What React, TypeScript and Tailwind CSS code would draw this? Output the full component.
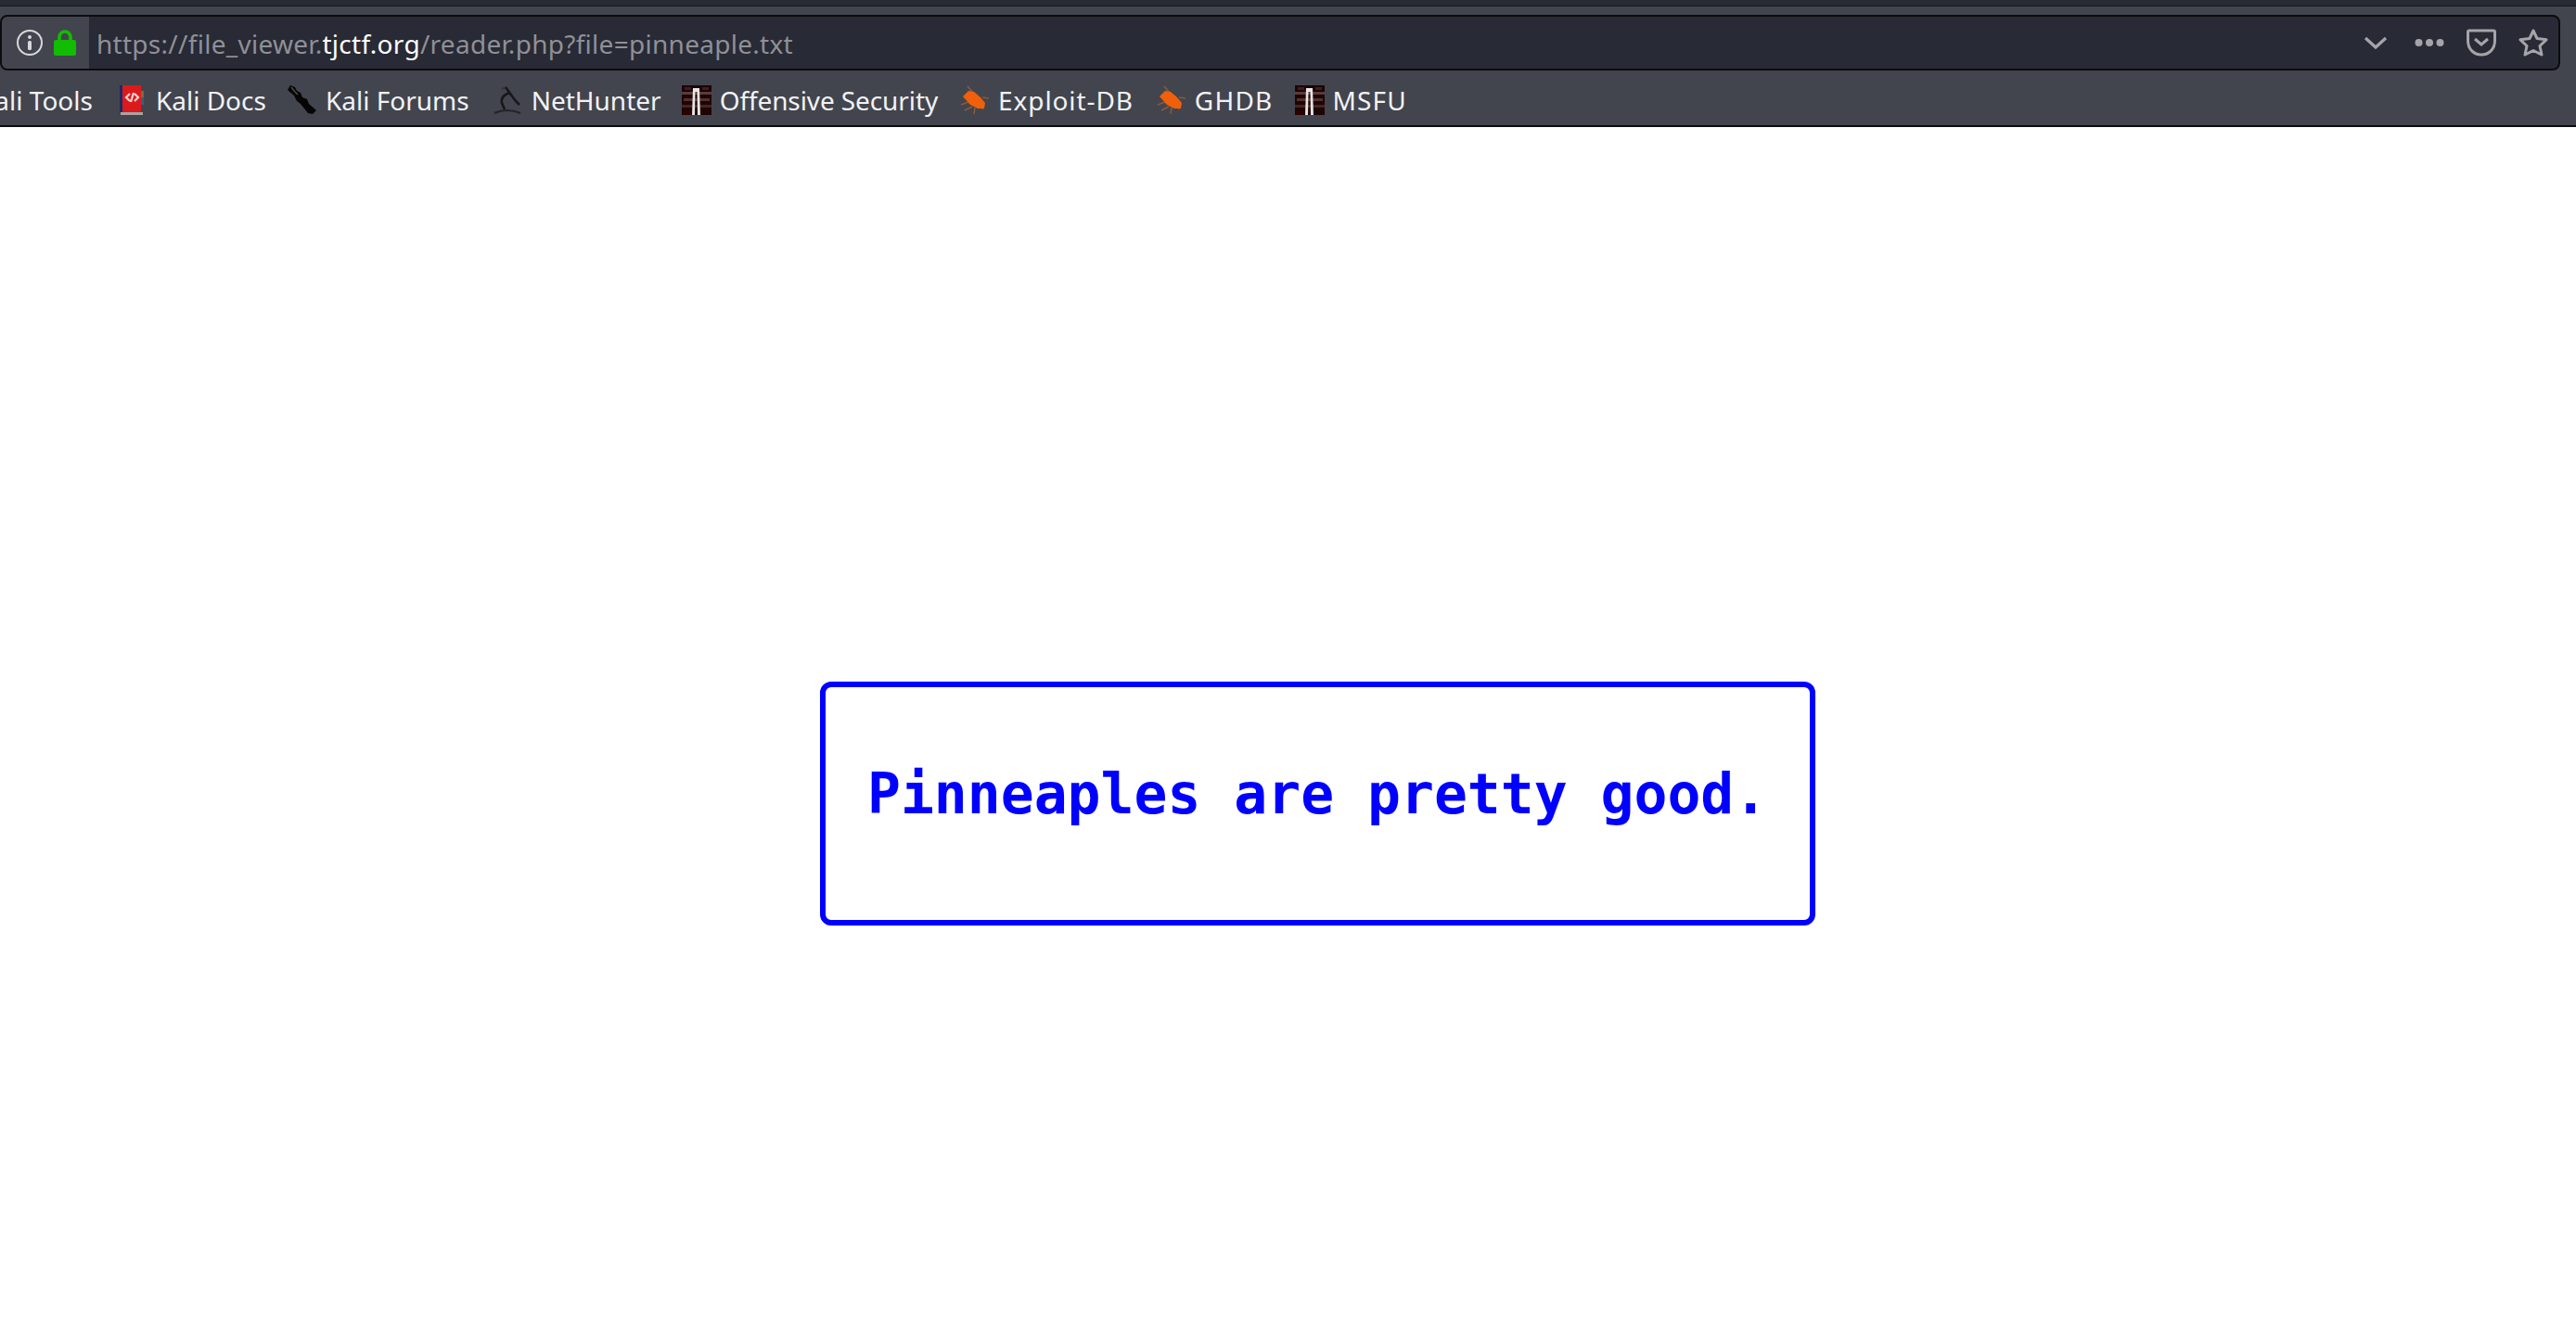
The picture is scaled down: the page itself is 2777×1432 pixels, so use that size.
import type { ReactNode } from "react";

function DocsIcon() {
  return (
    <svg width="26" height="32" viewBox="0 0 26 32">
      <rect x="0" y="0" width="4" height="29" fill="#1d2a63" />
      <rect x="3" y="0" width="20" height="29" fill="#dc1a1c" />
      <rect x="23" y="6" width="3" height="7" fill="#7d6a3a" />
      <rect x="23" y="13" width="3" height="8" fill="#35617a" />
      <rect x="1" y="29" width="24" height="3" fill="#a8a4a4" />
      <path d="M11 9 L7 13 L11 17 M16 9 L20 13 L16 17 M15 8 L12 18" fill="none" stroke="#f3d4d4" strokeWidth="2.2" />
    </svg>
  );
}

function ForumsIcon() {
  return (
    <svg width="33" height="32" viewBox="0 0 33 32">
      <path d="M1 5 L4 0 L9 2 L11 6 L15 8 L17 13 L22 15 L24 20 L32 27 L28 31 L23 30 L19 25 L15 20 L11 17 L8 11 Z" fill="#050505" />
      <path d="M5 2 L9 7 L12 10" fill="none" stroke="#4c4c4c" strokeWidth="1.5" />
    </svg>
  );
}

function NetHunterIcon() {
  return (
    <svg width="30" height="32" viewBox="0 0 30 32">
      <path d="M13 2 L18 9 L24 17 L28 21" fill="none" stroke="#16171b" strokeWidth="2.6" />
      <path d="M18 8 C11 10 8 14 9 19 L12 26" fill="none" stroke="#16171b" strokeWidth="2.6" />
      <path d="M1 30 C9 26 20 26 29 30" fill="none" stroke="#22242a" strokeWidth="2.2" />
      <path d="M9 4 L13 2" fill="none" stroke="#30323a" strokeWidth="1.5" />
    </svg>
  );
}

function OffsecIcon() {
  return (
    <svg width="32" height="32" viewBox="0 0 32 32">
      <rect width="32" height="32" fill="#1d0505" />
      <rect x="0" y="7" width="32" height="3" fill="#5a3a3a" />
      <rect x="2" y="14" width="28" height="3" fill="#54302f" />
      <rect x="0" y="21" width="32" height="3" fill="#472424" />
      <rect x="3" y="2" width="7" height="3" fill="#3a2020" />
      <rect x="22" y="2" width="7" height="3" fill="#3a2020" />
      <rect x="2" y="27" width="8" height="5" fill="#300000" />
      <path d="M12 3 H19 L20 32 H17 L16.5 7 H14.5 L14 32 H11 Z" fill="#e8e4e4" />
    </svg>
  );
}

function BugIcon() {
  return (
    <svg width="32" height="32" viewBox="0 0 32 32" className="blur-[0.4px]">
      <path d="M8 1 L14 8 M1 21 L9 18 M5 27 L13 23 M15 31 L16 24 M24 26 L23 22 M24 13 L31 14" stroke="#8a5a3c" strokeWidth="1.6" fill="none" />
      <path d="M3 12 L9 6 L15 7 L22 13 L27 19 L26 25 L19 25 L11 21 Z" fill="#f0600a" />
    </svg>
  );
}

const bookmarks: { label: string; icon?: ReactNode; className: string }[] = [
  { label: "Kali Tools", className: "ml-[-23px]" },
  { label: "Kali Docs", icon: <DocsIcon />, className: "ml-[29px] gap-[13px]" },
  { label: "Kali Forums", icon: <ForumsIcon />, className: "ml-[22px] gap-[9px]" },
  { label: "NetHunter", icon: <NetHunterIcon />, className: "ml-[26px] gap-[11px]" },
  { label: "Offensive Security", icon: <OffsecIcon />, className: "ml-[22px] gap-[9px] tracking-[-0.1px]" },
  { label: "Exploit-DB", icon: <BugIcon />, className: "ml-[24px] gap-[9px] tracking-[0.9px]" },
  { label: "GHDB", icon: <BugIcon />, className: "ml-[25px] gap-[9px] tracking-[1.2px]" },
  { label: "MSFU", icon: <OffsecIcon />, className: "ml-[24px] gap-[8px] tracking-[1.2px]" },
];

export default function App() {
  return (
    <div className="h-screen overflow-hidden bg-white">
      {/* Browser chrome */}
      <div className="h-[6px] bg-[#282a35]" />
      <div className="flex h-[131px] flex-col border-t border-b-2 border-t-[#17181d] border-b-[#0c0c0d] bg-[#42454e] font-['Noto_Sans',sans-serif]">
        <div className="mt-[9px] mr-[17px] flex h-[60px] shrink-0 items-center overflow-hidden rounded-lg border-2 border-[#0c0c0d] bg-[#282a35]">
          <div className="flex h-full w-[94px] shrink-0 items-center bg-[#42454e] pl-[15px]">
            <svg width="30" height="30" viewBox="0 0 30 30" className="shrink-0">
              <circle cx="15" cy="15" r="13" fill="none" stroke="#d7d7db" strokeWidth="2" />
              <circle cx="15" cy="9" r="2" fill="#d7d7db" />
              <rect x="13" y="13" width="4" height="10" rx="1.5" fill="#d7d7db" />
            </svg>
            <svg width="24" height="28" viewBox="0 0 24 28" className="ml-[11px] shrink-0">
              <path d="M6 13 V8 a6 6 0 0 1 12 0 V13" fill="none" stroke="#12bc00" strokeWidth="3.6" />
              <rect x="0" y="11" width="24" height="17" rx="2.5" fill="#12bc00" />
            </svg>
          </div>
          <div className="ml-[8px] pt-[2px] text-[28px] tracking-[0.28px] text-[#8f9095]">
            https://file_viewer.<span className="text-white">tjctf.org</span>/reader.php?file=pinneaple.txt
          </div>
          <div className="ml-auto flex items-center">
            <svg width="28" height="16" viewBox="0 0 28 16" className="mr-[28px]">
              <path d="M3 3 L14 13 L25 3" fill="none" stroke="#a4a5a9" strokeWidth="3.2" />
            </svg>
            <svg width="32" height="10" viewBox="0 0 32 10" className="mr-[24px]">
              <circle cx="4.5" cy="5" r="4" fill="#a4a5a9" />
              <circle cx="16" cy="5" r="4" fill="#a4a5a9" />
              <circle cx="27.5" cy="5" r="4" fill="#a4a5a9" />
            </svg>
            <svg width="32" height="30" viewBox="0 0 32 30" className="mr-[24px]">
              <path d="M3 2 H29 a1.5 1.5 0 0 1 1.5 1.5 V13 C30.5 22 24 28 16 28 C8 28 1.5 22 1.5 13 V3.5 A1.5 1.5 0 0 1 3 2 Z" fill="none" stroke="#a4a5a9" strokeWidth="3" />
              <path d="M9 11 L16 17 L23 11" fill="none" stroke="#a4a5a9" strokeWidth="3" />
            </svg>
            <svg width="32" height="32" viewBox="0 0 32 32" className="mr-[11px]">
              <path d="M16 3 L20 11.5 L30 12.8 L23 19.5 L25 29 L16 24.5 L7 29 L9 19.5 L2 12.8 L12 11.5 Z" fill="none" stroke="#a4a5a9" strokeWidth="3" strokeLinejoin="round" />
            </svg>
          </div>
        </div>
        <div className="flex flex-1 items-center whitespace-nowrap pt-[5px] text-[28px] text-[#f2f2f4]">
          {bookmarks.map((b) => (
            <div key={b.label} className={`flex shrink-0 items-center ${b.className}`}>
              {b.icon}
              <span>{b.label}</span>
            </div>
          ))}
        </div>
      </div>

      {/* Page content */}
      <div className="mt-[598px] ml-[884px] w-[1073px] rounded-xl border-[6px] border-[#0000ff] pt-[81px] pb-[100px] pl-[45px] font-['DejaVu_Sans_Mono',monospace] text-[59.7px] leading-[70px] font-bold whitespace-pre text-[#0000ff]">
        Pinneaples are pretty good.
      </div>
    </div>
  );
}
